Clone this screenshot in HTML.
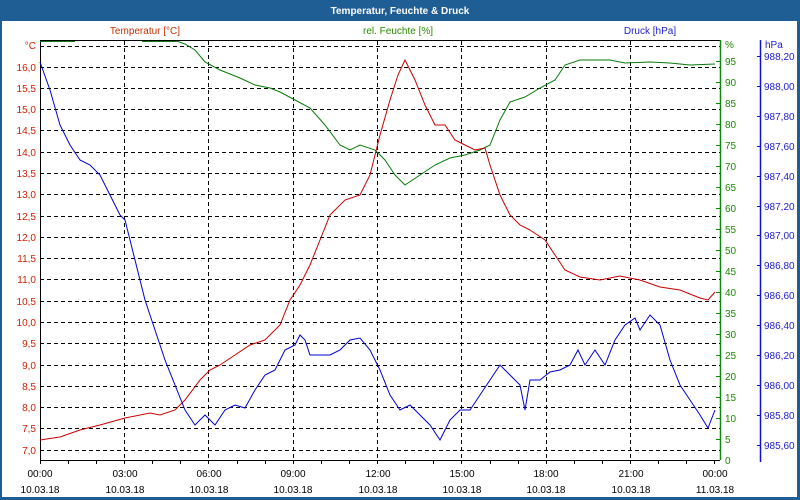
<!DOCTYPE html>
<html><head><meta charset="utf-8"><style>
html,body{margin:0;padding:0;width:800px;height:500px;overflow:hidden;background:#fff;}
svg{display:block;font-family:"Liberation Sans",Tahoma,sans-serif;}
</style></head><body>
<svg width="800" height="500" viewBox="0 0 800 500" xmlns="http://www.w3.org/2000/svg">
<rect x="0" y="0" width="800" height="500" fill="#1f5e94"/>
<rect x="2" y="21" width="795" height="476" fill="#fff"/>
<text x="400" y="14" fill="#fff" font-size="10" font-weight="bold" text-anchor="middle">Temperatur, Feuchte &amp; Druck</text>
<text x="145" y="34" fill="#c83000" font-size="10" text-anchor="middle">Temperatur [°C]</text>
<text x="398" y="34" fill="#2a8a00" font-size="10" text-anchor="middle">rel. Feuchte [%]</text>
<text x="650" y="34" fill="#2020d0" font-size="10" text-anchor="middle">Druck [hPa]</text>
<g stroke="#000" stroke-width="1" stroke-dasharray="4,3" fill="none">
<path d="M40 46.5H720M40 67.5H720M40 88.5H720M40 109.5H720M40 130.5H720M40 152.5H720M40 173.5H720M40 194.5H720M40 216.5H720M40 237.5H720M40 258.5H720M40 279.5H720M40 301.5H720M40 322.5H720M40 343.5H720M40 365.5H720M40 386.5H720M40 407.5H720M40 428.5H720M40 450.5H720"/>
<path d="M124.5 41V460M208.5 41V460M293.5 41V460M377.5 41V460M461.5 41V460M546.5 41V460M630.5 41V460"/>
</g>
<path d="M40.5 41V460.5H720M40 40.5H720" stroke="#000" fill="none"/>
<path d="M720.5 40V460" stroke="#0a8a0a" stroke-width="1.5" fill="none"/>
<path d="M760.5 40V462" stroke="#1010d0" stroke-width="1.5" fill="none"/>
<g stroke="#000"><path d="M40.5 460v4M68.5 460v4M96.5 460v4M124.5 460v4M152.5 460v4M180.5 460v4M208.5 460v4M237.5 460v4M265.5 460v4M293.5 460v4M321.5 460v4M349.5 460v4M377.5 460v4M405.5 460v4M433.5 460v4M461.5 460v4M490.5 460v4M518.5 460v4M546.5 460v4M574.5 460v4M602.5 460v4M630.5 460v4M658.5 460v4M686.5 460v4M714.5 460v4"/></g>
<g stroke="#0a8a0a"><path d="M716 61.5h4M716 82.5h4M716 103.5h4M716 124.5h4M716 145.5h4M716 166.5h4M716 187.5h4M716 208.5h4M716 229.5h4M716 250.5h4M716 271.5h4M716 292.5h4M716 313.5h4M716 334.5h4M716 355.5h4M716 376.5h4M716 397.5h4M716 418.5h4M716 439.5h4"/></g>
<g stroke="#1010d0"><path d="M757 56.5h3M757 86.5h3M757 116.5h3M757 146.5h3M757 176.5h3M757 206.5h3M757 235.5h3M757 265.5h3M757 295.5h3M757 325.5h3M757 355.5h3M757 385.5h3M757 415.5h3M757 445.5h3"/></g>
<g font-size="10" fill="#d02000" text-anchor="end">
<text x="36" y="49">°C</text>
<text x="36" y="71">16,0</text><text x="36" y="92">15,5</text><text x="36" y="113">15,0</text><text x="36" y="134">14,5</text><text x="36" y="156">14,0</text><text x="36" y="177">13,5</text><text x="36" y="198">13,0</text><text x="36" y="220">12,5</text><text x="36" y="241">12,0</text><text x="36" y="262">11,5</text><text x="36" y="283">11,0</text><text x="36" y="305">10,5</text><text x="36" y="326">10,0</text><text x="36" y="347">9,5</text><text x="36" y="369">9,0</text><text x="36" y="390">8,5</text><text x="36" y="411">8,0</text><text x="36" y="432">7,5</text><text x="36" y="454">7,0</text>
</g>
<g font-size="10" fill="#1a8a00">
<text x="725" y="48">%</text>
<text x="725" y="65">95</text><text x="725" y="86">90</text><text x="725" y="107">85</text><text x="725" y="128">80</text><text x="725" y="149">75</text><text x="725" y="170">70</text><text x="725" y="191">65</text><text x="725" y="212">60</text><text x="725" y="233">55</text><text x="725" y="254">50</text><text x="725" y="275">45</text><text x="725" y="296">40</text><text x="725" y="317">35</text><text x="725" y="338">30</text><text x="725" y="359">25</text><text x="725" y="380">20</text><text x="725" y="401">15</text><text x="725" y="422">10</text><text x="725" y="443">5</text><text x="725" y="464">0</text>
</g>
<g font-size="10" fill="#2020d0">
<text x="765" y="48">hPa</text>
<text x="764" y="60">988,20</text><text x="764" y="90">988,00</text><text x="764" y="120">987,80</text><text x="764" y="150">987,60</text><text x="764" y="180">987,40</text><text x="764" y="210">987,20</text><text x="764" y="239">987,00</text><text x="764" y="269">986,80</text><text x="764" y="299">986,60</text><text x="764" y="329">986,40</text><text x="764" y="359">986,20</text><text x="764" y="389">986,00</text><text x="764" y="419">985,80</text><text x="764" y="449">985,60</text>
</g>
<g font-size="10" fill="#000" text-anchor="middle">
<text x="40" y="477">00:00</text><text x="125" y="477">03:00</text><text x="209" y="477">06:00</text><text x="293" y="477">09:00</text><text x="378" y="477">12:00</text><text x="462" y="477">15:00</text><text x="546" y="477">18:00</text><text x="631" y="477">21:00</text><text x="715" y="477">00:00</text>
<text x="40" y="493">10.03.18</text><text x="125" y="493">10.03.18</text><text x="209" y="493">10.03.18</text><text x="293" y="493">10.03.18</text><text x="378" y="493">10.03.18</text><text x="462" y="493">10.03.18</text><text x="546" y="493">10.03.18</text><text x="631" y="493">10.03.18</text><text x="715" y="493">11.03.18</text>
</g>
<path fill="none" stroke="#0a7a0a" d="M40 41.5H75M142 41.5H178L185 44L195 50L205 62L220 70L240 78L255 85L270 88L280 92L295 100L310 108L325 125L340 145L350 150L360 145L375 150L385 160L395 175L405 185L420 175L435 165L450 158L465 155L480 150L490 145L500 120L510 102L525 97L540 88L555 80L565 65L580 60L610 60L625 63L650 62L670 63L690 65L715 64"/>
<polyline fill="none" stroke="#c80000" points="40,440 60,437 80,430 100,425 125,418 150,413 160,415 175,410 185,400 200,380 210,370 220,365 235,355 250,345 265,340 280,325 290,300 300,285 310,265 320,240 330,215 345,200 360,195 370,175 380,135 390,100 398,75 405,60 415,80 425,105 435,125 445,125 455,140 465,145 475,150 485,148 490,165 500,195 510,215 520,225 530,230 545,240 555,255 565,270 580,277 600,280 620,276 640,280 660,287 680,290 700,298 708,300 715,292"/>
<polyline fill="none" stroke="#0000d0" points="40,62 50,90 60,125 70,145 80,160 90,165 100,175 110,195 120,215 125,220 135,260 145,300 155,330 165,360 175,385 185,410 195,425 205,415 215,425 225,410 235,405 245,408 255,390 265,375 275,370 285,350 295,345 300,335 305,340 310,355 320,355 330,355 340,350 350,340 360,338 370,350 380,370 390,395 400,410 410,405 420,415 430,425 440,440 450,420 460,410 470,410 480,395 490,380 500,365 510,375 520,385 525,410 530,380 540,380 550,372 560,370 570,365 578,350 585,365 595,350 605,365 615,340 625,325 635,318 640,330 650,315 660,325 670,360 680,385 690,400 700,415 708,428 715,410"/>
</svg>
</body></html>
